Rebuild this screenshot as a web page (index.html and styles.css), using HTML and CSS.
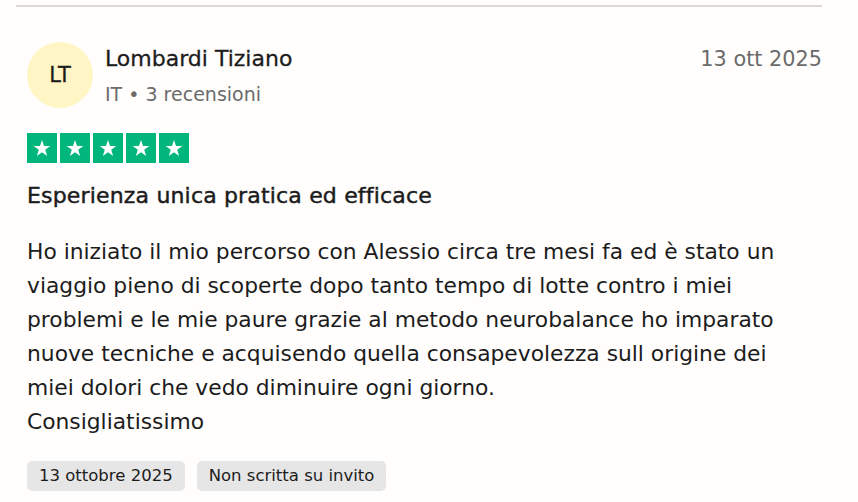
FILE: index.html
```html
<!DOCTYPE html>
<html lang="it">
<head>
<meta charset="utf-8">
<title>Recensione</title>
<link rel="stylesheet" href="styles.css">
</head>
<body>
<article class="review">
  <div class="divider"></div>
  <header class="head">
    <div class="avatar">LT</div>
    <div class="who">
      <div class="name">Lombardi Tiziano</div>
      <div class="meta">IT • 3 recensioni</div>
    </div>
    <div class="date">13 ott 2025</div>
  </header>
  <div class="stars">
    <span class="star"><svg viewBox="0 0 24 24"><path d="M12 3.2l2.2 6.6h6.9l-5.6 4.1 2.1 6.7-5.6-4.1-5.6 4.1 2.1-6.7-5.6-4.1h6.9z"/></svg></span>
    <span class="star"><svg viewBox="0 0 24 24"><path d="M12 3.2l2.2 6.6h6.9l-5.6 4.1 2.1 6.7-5.6-4.1-5.6 4.1 2.1-6.7-5.6-4.1h6.9z"/></svg></span>
    <span class="star"><svg viewBox="0 0 24 24"><path d="M12 3.2l2.2 6.6h6.9l-5.6 4.1 2.1 6.7-5.6-4.1-5.6 4.1 2.1-6.7-5.6-4.1h6.9z"/></svg></span>
    <span class="star"><svg viewBox="0 0 24 24"><path d="M12 3.2l2.2 6.6h6.9l-5.6 4.1 2.1 6.7-5.6-4.1-5.6 4.1 2.1-6.7-5.6-4.1h6.9z"/></svg></span>
    <span class="star"><svg viewBox="0 0 24 24"><path d="M12 3.2l2.2 6.6h6.9l-5.6 4.1 2.1 6.7-5.6-4.1-5.6 4.1 2.1-6.7-5.6-4.1h6.9z"/></svg></span>
  </div>
  <h2 class="title">Esperienza unica pratica ed efficace</h2>
  <p class="body">Ho iniziato il mio percorso con Alessio circa tre mesi fa ed è stato un viaggio pieno di scoperte dopo tanto tempo di lotte contro i miei problemi e le mie paure grazie al metodo neurobalance ho imparato nuove tecniche e acquisendo quella consapevolezza sull origine dei miei dolori che vedo diminuire ogni giorno.<br>Consigliatissimo</p>
  <div class="tags">
    <span class="tag">13 ottobre 2025</span>
    <span class="tag">Non scritta su invito</span>
  </div>
</article>
</body>
</html>
```
FILE: styles.css
```css
html, body {
  margin: 0;
  padding: 0;
  background: #fffefc;
}
body {
  font-family: "DejaVu Sans", "Noto Sans", sans-serif;
  color: #1c1c1c;
}
.review {
  width: 806px;
  padding: 5px 0 0 16px;
}
.divider {
  height: 2px;
  background: #dcd8d3;
}
.head {
  display: flex;
  align-items: flex-start;
  margin-top: 35px;
  padding-left: 11px;
}
.avatar {
  width: 66px;
  height: 66px;
  border-radius: 50%;
  background: #fff5c5;
  display: flex;
  align-items: center;
  justify-content: center;
  font-size: 21px;
  color: #1c1c1c;
  -webkit-text-stroke: 0.3px #1c1c1c;
  flex-shrink: 0;
}
.who {
  margin-left: 12px;
  flex: 1;
}
.name {
  font-size: 22px;
  line-height: 30px;
  margin-top: 2px;
  -webkit-text-stroke: 0.3px #1c1c1c;
}
.meta {
  font-size: 19px;
  color: #6b6b6b;
  line-height: 30px;
  margin-top: 5px;
}
.date {
  font-size: 20.8px;
  color: #6b6b6b;
  line-height: 30px;
  margin-top: 2px;
}
.stars {
  display: flex;
  gap: 3px;
  margin: 24px 0 0 11px;
}
.star {
  width: 30px;
  height: 30px;
  background: #00b67a;
  display: flex;
  align-items: center;
  justify-content: center;
}
.star svg {
  width: 22px;
  height: 22px;
  fill: #fff;
}
.title {
  margin: 18px 0 0 11px;
  font-size: 22px;
  font-weight: normal;
  letter-spacing: 0.17px;
  -webkit-text-stroke: 0.45px #1c1c1c;
  line-height: 30px;
}
.body {
  margin: 24px 0 0 11px;
  max-width: 775px;
  font-size: 21.8px;
  letter-spacing: 0;
  line-height: 34px;
}
.tags {
  display: flex;
  gap: 12px;
  margin: 22px 0 0 11px;
}
.tag {
  background: #e6e6e6;
  border-radius: 5px;
  font-size: 16.5px;
  line-height: 30px;
  padding: 0 12px;
  color: #1c1c1c;
}
```
